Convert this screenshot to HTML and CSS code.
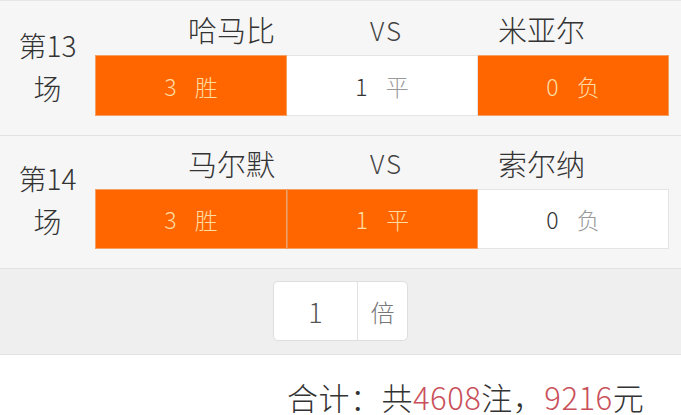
FILE: index.html
```html
<!DOCTYPE html>
<html lang="zh">
<head>
<meta charset="utf-8">
<link rel="stylesheet" href="styles.css">
</head>
<body>
<div class="page">
  <div class="match first">
    <div class="label"><span>第13</span><span>场</span></div>
    <div class="body">
      <div class="names">
        <div class="home">哈马比</div>
        <div class="vs">VS</div>
        <div class="away">米亚尔</div>
      </div>
      <div class="opts">
        <div class="opt on"><span class="n">3</span><span class="t">胜</span></div>
        <div class="opt"><span class="n">1</span><span class="t">平</span></div>
        <div class="opt on"><span class="n">0</span><span class="t">负</span></div>
      </div>
    </div>
  </div>
  <div class="match">
    <div class="label"><span>第14</span><span>场</span></div>
    <div class="body">
      <div class="names">
        <div class="home">马尔默</div>
        <div class="vs">VS</div>
        <div class="away">索尔纳</div>
      </div>
      <div class="opts">
        <div class="opt on"><span class="n">3</span><span class="t">胜</span></div>
        <div class="opt on"><span class="n">1</span><span class="t">平</span></div>
        <div class="opt"><span class="n">0</span><span class="t">负</span></div>
      </div>
    </div>
  </div>
  <div class="multi">
    <div class="mbox">
      <div class="mval">1</div>
      <div class="munit">倍</div>
    </div>
  </div>
  <div class="total">合计：共<span class="red">4608</span>注，<span class="red">9216</span>元</div>
</div>
</body>
</html>
```
FILE: styles.css
```css
html, body {
  margin: 0;
  padding: 0;
  background: #ffffff;
}
body {
  font-family: "Noto Sans CJK SC", "Noto Sans", sans-serif;
  font-weight: 300;
  color: #333;
}
.page {
  width: 681px;
  height: 415px;
  overflow: hidden;
  background: #fff;
}
.match {
  display: flex;
  background: #f6f6f6;
  border-bottom: 1px solid #e2e2e2;
  height: 132px;
}
.match.first {
  border-top: 1px solid #e6e6e6;
  padding-top: 2px;
  box-shadow: 0 -2px 0 #f6f6f6;
}
.label {
  width: 95px;
  display: flex;
  flex-direction: column;
  justify-content: center;
  align-items: center;
  font-size: 28px;
  line-height: 43px;
  color: #333;
  padding-bottom: 4px;
}
.body {
  width: 574px;
  display: flex;
  flex-direction: column;
}
.names {
  height: 52px;
  display: grid;
  grid-template-columns: 192px 191px 191px;
  align-items: center;
  font-size: 29px;
  color: #333;
}
.match:not(.first) .names {
  height: 53px;
}
.home {
  text-align: right;
  padding-right: 12px;
}
.vs {
  text-align: center;
  font-size: 26px;
  letter-spacing: 2px;
  color: #444;
  padding-left: 8px;
}
.away {
  text-align: left;
  padding-left: 20px;
}
.opts {
  height: 61px;
  display: grid;
  grid-template-columns: 192px 191px 191px;
}
.match:not(.first) .opts {
  height: 60px;
}
.opt {
  box-sizing: border-box;
  background: #fff;
  border: 1px solid #e4e4e4;
  display: flex;
  justify-content: center;
  align-items: center;
  gap: 18px;
  font-size: 23px;
}
.opt + .opt {
  border-left: none;
}
.opt .n {
  color: #333;
}
.opt .t {
  color: #999;
}
.opt.on {
  background: #ff6600;
  border-color: #f4a063;
}
.opt.on .n, .opt.on .t {
  color: #ffdca0;
}
.opt.on + .opt.on {
  border-left: 1px solid #e88a48;
}
.multi {
  height: 86px;
  background: #efefef;
  border-bottom: 1px solid #e2e2e2;
  display: flex;
  justify-content: center;
  align-items: flex-start;
  padding-top: 12px;
  box-sizing: border-box;
}
.mbox {
  width: 135px;
  height: 60px;
  box-sizing: border-box;
  background: #fff;
  border: 1px solid #dedede;
  border-radius: 5px;
  display: flex;
}
.mval {
  width: 83px;
  border-right: 1px solid #e2e2e2;
  display: flex;
  justify-content: center;
  align-items: center;
  font-size: 27px;
  color: #555;
}
.munit {
  flex: 1;
  display: flex;
  justify-content: center;
  align-items: center;
  font-size: 24px;
  color: #777;
}
.total {
  padding-top: 26px;
  padding-left: 287px;
  font-size: 31px;
  line-height: 32px;
  letter-spacing: 0.5px;
  color: #333;
  white-space: nowrap;
}
.red {
  color: #c9505a;
}
```
